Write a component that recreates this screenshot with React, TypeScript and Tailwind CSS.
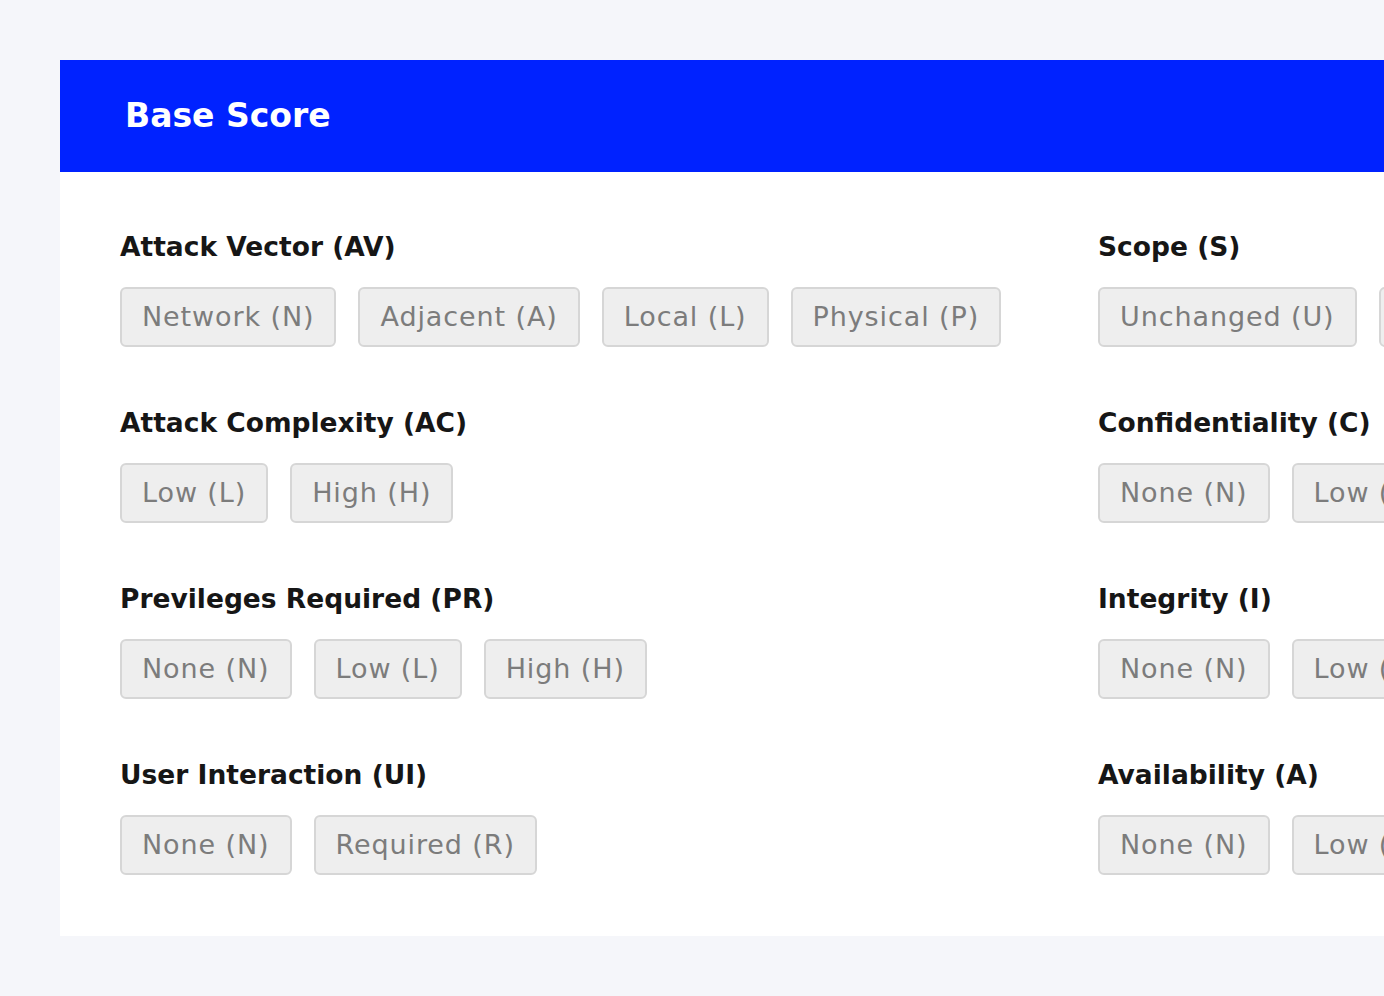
const left = [
  { title: "Attack Vector (AV)", options: ["Network (N)", "Adjacent (A)", "Local (L)", "Physical (P)"] },
  { title: "Attack Complexity (AC)", options: ["Low (L)", "High (H)"] },
  { title: "Previleges Required (PR)", options: ["None (N)", "Low (L)", "High (H)"] },
  { title: "User Interaction (UI)", options: ["None (N)", "Required (R)"] },
];

const right = [
  { title: "Scope (S)", options: ["Unchanged (U)", "Changed (C)"] },
  { title: "Confidentiality (C)", options: ["None (N)", "Low (L)", "High (H)"] },
  { title: "Integrity (I)", options: ["None (N)", "Low (L)", "High (H)"] },
  { title: "Availability (A)", options: ["None (N)", "Low (L)", "High (H)"] },
];

function Metric({ title, options }: { title: string; options: string[] }) {
  return (
    <div>
      <h3 className="text-[26.5px] leading-[36px] font-bold text-[#161616] whitespace-nowrap">{title}</h3>
      <div className="mt-[22px] flex gap-[22px] whitespace-nowrap">
        {options.map((o) => (
          <button
            key={o}
            className="h-[60px] px-[20px] rounded-md border-2 border-[#d6d6d6] bg-[#eeeeee] text-[27px] tracking-[0.9px] text-[#7c7c7c] shrink-0"
          >
            {o}
          </button>
        ))}
      </div>
    </div>
  );
}

export default function App() {
  return (
    <div
      className="w-[1384px] h-[996px] overflow-hidden bg-[#f5f6fa] pt-[60px] pl-[60px]"
      style={{ fontFamily: '"DejaVu Sans", sans-serif' }}
    >
      <div className="w-[1600px] bg-white">
        <div className="h-[112px] bg-[#0022ff] pl-[65px] flex items-center">
          <h2 className="text-[33px] font-bold text-white">Base Score</h2>
        </div>
        <div className="flex pl-[60px] pt-[57px] pb-[61px]">
          <div className="w-[978px] flex flex-col gap-[58px]">
            {left.map((m) => (
              <Metric key={m.title} {...m} />
            ))}
          </div>
          <div className="flex flex-col gap-[58px]">
            {right.map((m) => (
              <Metric key={m.title} {...m} />
            ))}
          </div>
        </div>
      </div>
    </div>
  );
}
